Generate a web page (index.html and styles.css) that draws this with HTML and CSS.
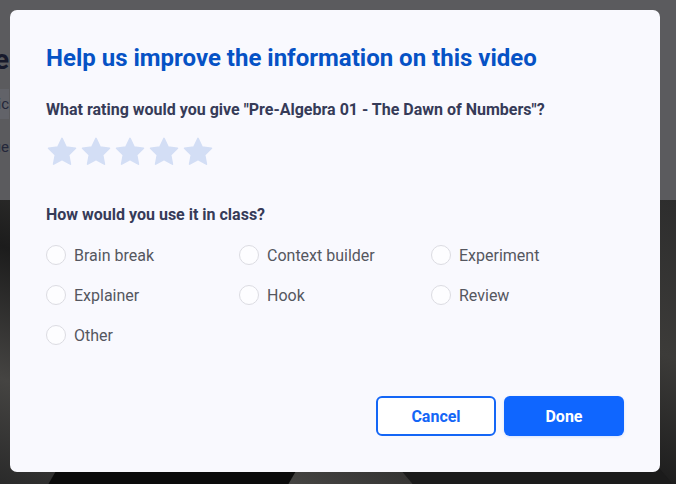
FILE: index.html
```html
<!DOCTYPE html>
<html lang="en">
  <head>
    <meta charset="UTF-8" />
    <meta name="viewport" content="width=device-width, initial-scale=1.0" />
    <title>Video feedback</title>
    <link rel="stylesheet" href="styles.css">
  </head>

  <body>
    <div class="page">
      <div class="page-top">
        <div class="page-text">
          <p class="bg-title">Pre-Algebra 01 - The Dawn of Numbers | Guide</p>
          <p class="bg-line bg-band">Topic</p>
          <p class="bg-line bg-last">Includes: Value</p>
        </div>
      </div>
      <div class="page-art">
        <div class="shape shape-a"></div>
        <div class="shape shape-b"></div>
      </div>
    </div>

    <div class="overlay">
      <div class="modal">
        <h1 class="modal-title">Help us improve the information on this video</h1>

        <h2 class="question">What rating would you give "Pre-Algebra 01 - The Dawn of Numbers"?</h2>
        <div class="stars">
          <svg class="star" viewBox="0 0 24 24"><path d="M12 1.8l3.1 6.5 7 .9-5.1 4.9 1.3 7-6.3-3.4-6.3 3.4 1.3-7L1.9 9.2l7-.9z" stroke-linejoin="round" stroke-width="1.2"/></svg>
          <svg class="star" viewBox="0 0 24 24"><path d="M12 1.8l3.1 6.5 7 .9-5.1 4.9 1.3 7-6.3-3.4-6.3 3.4 1.3-7L1.9 9.2l7-.9z" stroke-linejoin="round" stroke-width="1.2"/></svg>
          <svg class="star" viewBox="0 0 24 24"><path d="M12 1.8l3.1 6.5 7 .9-5.1 4.9 1.3 7-6.3-3.4-6.3 3.4 1.3-7L1.9 9.2l7-.9z" stroke-linejoin="round" stroke-width="1.2"/></svg>
          <svg class="star" viewBox="0 0 24 24"><path d="M12 1.8l3.1 6.5 7 .9-5.1 4.9 1.3 7-6.3-3.4-6.3 3.4 1.3-7L1.9 9.2l7-.9z" stroke-linejoin="round" stroke-width="1.2"/></svg>
          <svg class="star" viewBox="0 0 24 24"><path d="M12 1.8l3.1 6.5 7 .9-5.1 4.9 1.3 7-6.3-3.4-6.3 3.4 1.3-7L1.9 9.2l7-.9z" stroke-linejoin="round" stroke-width="1.2"/></svg>
        </div>

        <h2 class="question question-use">How would you use it in class?</h2>
        <div class="options">
          <label class="option"><span class="radio"></span>Brain break</label>
          <label class="option"><span class="radio"></span>Context builder</label>
          <label class="option"><span class="radio"></span>Experiment</label>
          <label class="option"><span class="radio"></span>Explainer</label>
          <label class="option"><span class="radio"></span>Hook</label>
          <label class="option"><span class="radio"></span>Review</label>
          <label class="option"><span class="radio"></span>Other</label>
        </div>

        <div class="actions">
          <button class="btn btn-cancel">Cancel</button>
          <button class="btn btn-done">Done</button>
        </div>
      </div>
    </div>
  </body>
</html>
```

FILE: styles.css
```css
* {
  margin: 0;
  padding: 0;
  box-sizing: border-box;
}

body {
  font-family: Roboto, "Liberation Sans", sans-serif;
  width: 676px;
  height: 484px;
  overflow: hidden;
}

/* page behind the dialog */
.page {
  height: 484px;
  display: flex;
  flex-direction: column;
}

.page-top {
  height: 200px;
  background-color: #5b5b5e;
}

.page-text {
  width: 9px;
  padding-top: 44px;
  display: flex;
  flex-direction: column;
  align-items: flex-end;
  color: #24273a;
}

.bg-title {
  font-size: 28px;
  line-height: 32px;
  font-weight: 700;
  color: #17192b;
  white-space: nowrap;
}

.bg-line {
  margin-top: 13px;
  font-size: 15px;
  line-height: 22px;
  white-space: nowrap;
}

.bg-last {
  margin-top: 17px;
}

.bg-band {
  padding: 4px 0;
  background-color: #626369;
}

.page-art {
  flex: 1;
  position: relative;
  overflow: hidden;
  background: linear-gradient(200deg, #2d2d2d 0%, #3c3b39 30%, #1c1c1c 55%, #454442 80%, #2a2a2a 100%);
}

.shape {
  position: absolute;
}

.shape-a {
  left: 60px;
  bottom: -40px;
  width: 240px;
  height: 120px;
  background-color: #0b0b0b;
  transform: skewX(-30deg);
}

.shape-b {
  left: 400px;
  bottom: -30px;
  width: 260px;
  height: 90px;
  background-color: #1b1b1b;
  transform: skewX(40deg);
}

/* dialog */
.overlay {
  position: absolute;
  left: 0;
  top: 0;
  width: 676px;
  height: 484px;
  padding: 10px 16px 12px 10px;
}

.modal {
  height: 462px;
  background-color: #f9f9fe;
  border-radius: 7px;
  padding: 34px 36px 36px 36px;
  display: flex;
  flex-direction: column;
}

.modal-title {
  font-size: 24px;
  font-weight: 700;
  color: #0652c5;
  line-height: 28px;
}

.question {
  margin-top: 28px;
  font-size: 16px;
  font-weight: 700;
  color: #363b58;
  line-height: 20px;
}

.stars {
  display: flex;
  gap: 2px;
  margin-top: 16px;
}

.star {
  width: 32px;
  height: 32px;
  fill: #d3def5;
  stroke: #d3def5;
}

.question-use {
  margin-top: 37px;
}

.options {
  margin-top: 18px;
  display: grid;
  grid-template-columns: 193px 192px 1fr;
  row-gap: 16px;
}

.option {
  display: flex;
  align-items: center;
  gap: 8px;
  height: 24px;
  font-size: 16px;
  color: #55575f;
}

.radio {
  width: 20px;
  height: 20px;
  border-radius: 50%;
  border: 1px solid #dcdce2;
  background-color: #fdfdff;
}

.actions {
  margin-top: auto;
  display: flex;
  justify-content: flex-end;
  gap: 8px;
}

.btn {
  width: 120px;
  height: 40px;
  border-radius: 6px;
  font-family: Roboto, "Liberation Sans", sans-serif;
  font-size: 16px;
  font-weight: 700;
  cursor: pointer;
}

.btn-cancel {
  background-color: #ffffff;
  border: 2px solid #1466f6;
  color: #1466f6;
}

.btn-done {
  background-color: #0f66ff;
  border: none;
  color: #ffffff;
  box-shadow: 0 1px 3px rgba(15, 102, 255, 0.15);
}
```
